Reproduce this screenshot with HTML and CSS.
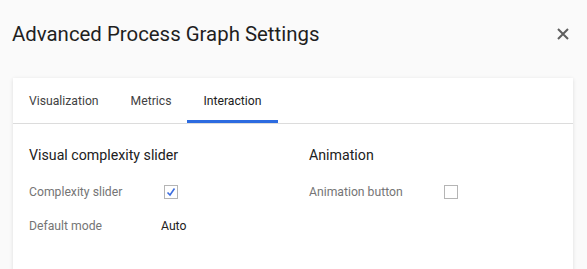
FILE: index.html
```html
<!DOCTYPE html>
<html lang="en">
  <head>
    <meta charset="UTF-8" />
    <meta name="viewport" content="width=device-width, initial-scale=1.0" />
    <title>Advanced Process Graph Settings</title>
    <link rel="stylesheet" href="styles.css">
  </head>
  <body>
    <div class="dialog-header">
      <h1>Advanced Process Graph Settings</h1>
      <button class="close-button" aria-label="Close">
        <svg width="12" height="12" viewBox="0 0 12 12">
          <path d="M1 1 L11 11 M11 1 L1 11" stroke="#5f5f5f" stroke-width="2" />
        </svg>
      </button>
    </div>

    <div class="card">
      <div class="tabs">
        <div class="tab">Visualization</div>
        <div class="tab">Metrics</div>
        <div class="tab active">Interaction</div>
      </div>

      <div class="tab-content">
        <div class="section">
          <h2>Visual complexity slider</h2>
          <div class="row">
            <span class="label">Complexity slider</span>
            <span class="checkbox checked">
              <svg width="12" height="12" viewBox="0 0 12 12">
                <path d="M2.5 6.5 L5 9 L9.5 2.5" fill="none" stroke="#3d6ee0" stroke-width="1.6" />
              </svg>
            </span>
          </div>
          <div class="row">
            <span class="label">Default mode</span>
            <span class="value">Auto</span>
          </div>
        </div>

        <div class="section">
          <h2>Animation</h2>
          <div class="row">
            <span class="label">Animation button</span>
            <span class="checkbox"></span>
          </div>
        </div>
      </div>
    </div>
  </body>
</html>
```

FILE: styles.css
```css
body {
  margin: 0;
  padding: 0 14px 0 13px;
  font-family: Roboto, 'Liberation Sans', sans-serif;
  background-color: #fafafa;
  color: #212121;
}

.dialog-header {
  display: flex;
  align-items: center;
  justify-content: space-between;
  height: 67px;
  margin-left: -1px;
}

h1 {
  margin: 0;
  font-size: 20.4px;
  font-weight: 400;
  color: #1f1f1f;
}

.close-button {
  border: none;
  background: none;
  padding: 0;
  margin-right: 4px;
  display: flex;
  cursor: pointer;
}

.card {
  margin-top: 11px;
  background-color: #fff;
  box-shadow: 0 1px 4px rgba(0, 0, 0, 0.12);
  height: 220px;
}

.tabs {
  display: flex;
  height: 45px;
  border-bottom: 1px solid #dcdcdc;
}

.tab {
  display: flex;
  align-items: center;
  padding: 3px 16px 0;
  height: 45px;
  font-size: 12.2px;
  color: #424242;
  border-bottom: 3px solid transparent;
  margin-bottom: -1px;
  box-sizing: border-box;
}

.tab.active {
  border-bottom-color: #2c6be0;
  color: #212121;
}

.tab-content {
  display: grid;
  grid-template-columns: 280px 1fr;
  padding: 22px 16px;
}

h2 {
  margin: 0 0 18px;
  font-size: 14.2px;
  font-weight: 400;
  color: #212121;
  line-height: 18px;
}

.row {
  display: flex;
  align-items: center;
  height: 20px;
  margin-bottom: 14px;
}

.label {
  width: 132px;
  font-size: 12.2px;
  color: #757575;
}

.value {
  font-size: 12.2px;
  color: #212121;
}

.checkbox {
  box-sizing: border-box;
  width: 14px;
  height: 14px;
  margin-left: 3px;
  border: 1px solid #b5b5b5;
  display: flex;
  align-items: center;
  justify-content: center;
}
```
